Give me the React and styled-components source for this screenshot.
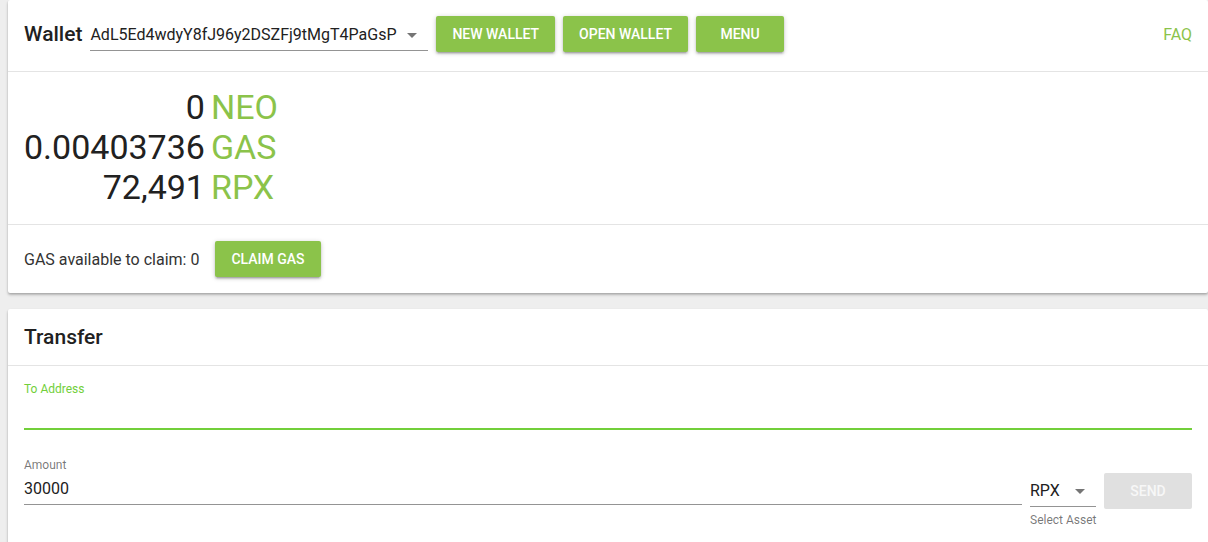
import React, { useState } from 'react';
import styled, { createGlobalStyle } from 'styled-components';

const GlobalStyle = createGlobalStyle`
  html, body {
    margin: 0;
    padding: 0;
    background: #eeeeee;
    font-family: Roboto, "Noto Sans", Arial, sans-serif;
    overflow: hidden;
  }
`;

const Page = styled.div`
  padding-left: 8px;
  width: 1200px;
  display: flex;
  flex-direction: column;
  gap: 16px;
`;

const Card = styled.section`
  background: #fff;
  border-radius: 2px;
  box-shadow: 0 2px 3px rgba(0, 0, 0, 0.22), 0 1px 2px rgba(0, 0, 0, 0.12);
`;

const Section = styled.div`
  display: flex;
  align-items: center;
  gap: 8px;
  padding: ${(p) => p.$padding || '16px'};
  border-bottom: ${(p) => (p.$last ? 'none' : '1px solid #e4e4e4')};
`;

const Title = styled.h2`
  margin: 0;
  font-size: 21px;
  font-weight: 500;
  color: #212121;
  line-height: 24px;
`;

const Dropdown = styled.div`
  position: relative;
  display: flex;
  align-items: center;
  width: ${(p) => p.$width}px;
  height: 34px;
  border-bottom: 1px solid rgba(0, 0, 0, 0.42);
  font-size: 16px;
  color: #212121;
  box-sizing: border-box;
  padding-top: 2px;
  cursor: pointer;
  flex-shrink: 0;
`;

const Arrow = styled.svg`
  position: absolute;
  right: 4px;
  top: 50%;
  margin-top: -11px;
  width: 24px;
  height: 24px;
  fill: rgba(0, 0, 0, 0.54);
`;

const Button = styled.button`
  height: 36px;
  min-width: 88px;
  padding: 0 16px;
  border: none;
  border-radius: 2px;
  font-family: inherit;
  font-size: 14px;
  font-weight: 500;
  text-transform: uppercase;
  color: ${(p) => (p.disabled ? '#f7f7f7' : '#fff')};
  background: ${(p) => (p.disabled ? '#e0e0e0' : '#8bc34a')};
  box-shadow: ${(p) =>
    p.disabled
      ? 'none'
      : '0 1px 5px rgba(0,0,0,0.2), 0 2px 2px rgba(0,0,0,0.14), 0 3px 1px -2px rgba(0,0,0,0.12)'};
  cursor: ${(p) => (p.disabled ? 'default' : 'pointer')};
  flex-shrink: 0;
`;

const FaqLink = styled.a`
  margin-left: auto;
  color: #8bc34a;
  font-size: 16px;
  text-decoration: none;
`;

const Balances = styled.div`
  display: grid;
  grid-template-columns: auto auto;
  justify-content: start;
  column-gap: 6px;
  padding: 15px 16px 17px 16px;
  border-bottom: 1px solid #e4e4e4;
  font-size: 34px;
  line-height: 40px;
`;

const Amount = styled.span`
  text-align: right;
  color: #212121;
`;

const Unit = styled.span`
  color: #8bc34a;
`;

const ClaimText = styled.span`
  font-size: 16px;
  color: #333;
  margin-right: 8px;
`;

const Form = styled.div`
  display: flex;
  flex-direction: column;
  gap: 27px;
  padding: 15px 16px 32px;
`;

const Field = styled.label`
  display: flex;
  flex-direction: column;
  flex: ${(p) => (p.$grow ? 1 : 'none')};
  width: ${(p) => (p.$width ? `${p.$width}px` : 'auto')};
`;

const FieldLabel = styled.span`
  font-size: 12px;
  line-height: 16px;
  color: ${(p) => (p.$focused ? '#72cf3a' : 'rgba(0, 0, 0, 0.54)')};
`;

const Input = styled.input`
  height: 31px;
  padding: 0;
  border: none;
  border-bottom: ${(p) => (p.$focused ? '2px solid #72cf3a' : '1px solid rgba(0, 0, 0, 0.42)')};
  font-family: inherit;
  font-size: 16px;
  color: #212121;
  background: transparent;
  outline: none;
`;

const Row = styled.div`
  display: flex;
  align-items: flex-start;
  gap: 8px;
`;

const Helper = styled.span`
  margin-top: 6px;
  font-size: 12px;
  white-space: nowrap;
  color: rgba(0, 0, 0, 0.54);
`;

const ArrowIcon = () => (
  <Arrow viewBox="0 0 24 24">
    <path d="M7 10l5 5 5-5z" />
  </Arrow>
);

const App = () => {
  const [to, setTo] = useState('');
  const [amount, setAmount] = useState('30000');

  return (
    <>
      <GlobalStyle />
      <Page>
        <Card>
          <Section $padding="16px 16px 19px">
            <Title>Wallet</Title>
            <Dropdown $width={338}>
              AdL5Ed4wdyY8fJ96y2DSZFj9tMgT4PaGsP
              <ArrowIcon />
            </Dropdown>
            <Button>New Wallet</Button>
            <Button>Open Wallet</Button>
            <Button>Menu</Button>
            <FaqLink href="#">FAQ</FaqLink>
          </Section>
          <Balances>
            <Amount>0</Amount>
            <Unit>NEO</Unit>
            <Amount>0.00403736</Amount>
            <Unit>GAS</Unit>
            <Amount>72,491</Amount>
            <Unit>RPX</Unit>
          </Balances>
          <Section $last>
            <ClaimText>GAS available to claim: 0</ClaimText>
            <Button>Claim Gas</Button>
          </Section>
        </Card>
        <Card>
          <Section>
            <Title>Transfer</Title>
          </Section>
          <Form>
            <Field>
              <FieldLabel $focused>To Address</FieldLabel>
              <Input $focused value={to} onChange={(e) => setTo(e.target.value)} />
            </Field>
            <Row>
              <Field $grow>
                <FieldLabel>Amount</FieldLabel>
                <Input value={amount} onChange={(e) => setAmount(e.target.value)} />
              </Field>
              <Field $width={66}>
                <FieldLabel>&nbsp;</FieldLabel>
                <Dropdown $width={66}>
                  RPX
                  <ArrowIcon />
                </Dropdown>
                <Helper>Select Asset</Helper>
              </Field>
              <Field>
                <FieldLabel>&nbsp;</FieldLabel>
                <Button disabled>Send</Button>
              </Field>
            </Row>
          </Form>
        </Card>
      </Page>
    </>
  );
};

export default App;
